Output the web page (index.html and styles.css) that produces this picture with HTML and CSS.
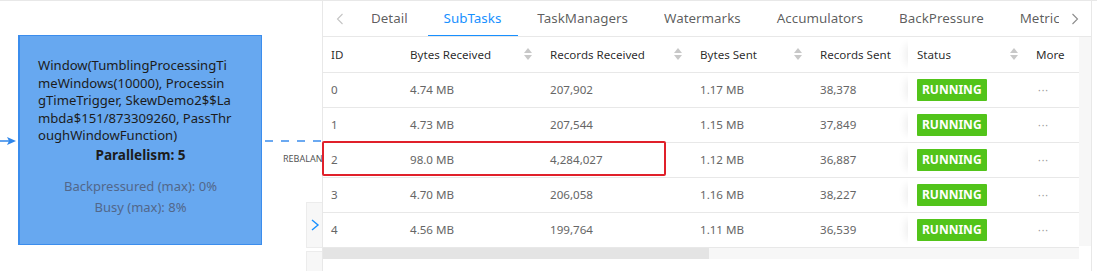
FILE: index.html
```html
<!DOCTYPE html>
<html>
<head>
  <title>SubTasks</title>
  <meta name="viewport" content="width=device-width,initial-scale=1">
  <link rel="stylesheet" href="styles.css">
</head>
<body>
  <div class="page">
    <div class="graph">
      <svg class="edge-in" width="18" height="10" viewBox="0 0 18 10">
        <line x1="0" y1="5" x2="9" y2="5" stroke="#2f86ea" stroke-width="1.5"/>
        <path d="M7 1 L16 5 L7 9 L9 5 Z" fill="#2f86ea"/>
      </svg>
      <div class="node">
        <div class="node-name">Window(TumblingProcessingTi<br>meWindows(10000), Processin<br>gTimeTrigger, SkewDemo2$$La<br>mbda$151/873309260, PassThr<br>oughWindowFunction)</div>
        <div class="node-para">Parallelism: 5</div>
        <div class="node-stat">Backpressured (max): 0%</div>
        <div class="node-stat">Busy (max): 8%</div>
      </div>
      <svg class="edge-out" width="57" height="4" viewBox="0 0 57 4">
        <line x1="0" y1="2" x2="57" y2="2" stroke="#3b8ded" stroke-width="1.3" stroke-dasharray="8 8"/>
      </svg>
      <div class="edge-label">REBALANCE</div>
      <div class="toggle toggle-open">
        <svg width="10" height="14" viewBox="0 0 10 14"><path d="M2 2 L8 7 L2 12" fill="none" stroke="#1890ff" stroke-width="1.4"/></svg>
      </div>
      <div class="toggle toggle-next">
        <svg width="10" height="14" viewBox="0 0 10 14"><path d="M3 12 L5 10" fill="none" stroke="#1890ff" stroke-width="1.4"/></svg>
      </div>
    </div>

    <div class="panel">
      <div class="tabs">
        <span class="tab-nav tab-prev">
          <svg width="8" height="12" viewBox="0 0 8 12"><path d="M6.5 1 L1.5 6 L6.5 11" fill="none" stroke="#c4c4c4" stroke-width="1.1"/></svg>
        </span>
        <div class="tab-list">
          <span class="tab">Detail</span>
          <span class="tab active">SubTasks</span>
          <span class="tab">TaskManagers</span>
          <span class="tab">Watermarks</span>
          <span class="tab">Accumulators</span>
          <span class="tab">BackPressure</span>
          <span class="tab">Metrics</span>
        </div>
        <span class="tab-nav tab-next">
          <svg width="8" height="12" viewBox="0 0 8 12"><path d="M1.5 1 L6.5 6 L1.5 11" fill="none" stroke="#8c8c8c" stroke-width="1.1"/></svg>
        </span>
      </div>

      <div class="table-area">
        <div class="table-body">
          <table class="subtasks">
            <colgroup>
              <col class="c-id"><col class="c-br"><col class="c-rr"><col class="c-bs"><col class="c-rs"><col class="c-st"><col class="c-more">
            </colgroup>
            <thead>
              <tr>
                <th>ID</th>
                <th><div class="th-sort">Bytes Received<i class="sorter"></i></div></th>
                <th><div class="th-sort">Records Received<i class="sorter"></i></div></th>
                <th><div class="th-sort">Bytes Sent<i class="sorter"></i></div></th>
                <th>Records Sent</th>
                <th class="fixed"><div class="th-sort">Status<i class="sorter"></i></div></th>
                <th>More</th>
              </tr>
            </thead>
            <tbody>
              <tr><td>0</td><td>4.74 MB</td><td>207,902</td><td>1.17 MB</td><td>38,378</td><td class="fixed"><span class="tag">RUNNING</span></td><td class="more">···</td></tr>
              <tr><td>1</td><td>4.73 MB</td><td>207,544</td><td>1.15 MB</td><td>37,849</td><td class="fixed"><span class="tag">RUNNING</span></td><td class="more">···</td></tr>
              <tr><td>2</td><td>98.0 MB</td><td>4,284,027</td><td>1.12 MB</td><td>36,887</td><td class="fixed"><span class="tag">RUNNING</span></td><td class="more">···</td></tr>
              <tr><td>3</td><td>4.70 MB</td><td>206,058</td><td>1.16 MB</td><td>38,227</td><td class="fixed"><span class="tag">RUNNING</span></td><td class="more">···</td></tr>
              <tr><td>4</td><td>4.56 MB</td><td>199,764</td><td>1.11 MB</td><td>36,539</td><td class="fixed"><span class="tag">RUNNING</span></td><td class="more">···</td></tr>
            </tbody>
          </table>
          <div class="hscroll"><div class="hscroll-thumb"></div></div>
          <div class="highlight"></div>
        </div>
        <div class="vscroll"></div>
      </div>
    </div>
  </div>
</body>
</html>
```

FILE: styles.css
```css
html,
body {
  margin: 0;
  background: #fff;
  font-family: 'Noto Sans', 'Open Sans', sans-serif;
  color: rgba(0, 0, 0, 0.65);
}

.page {
  display: flex;
  height: 271px;
  border-top: 1px solid #e8e8e8;
  box-sizing: border-box;
  overflow: hidden;
}

/* job graph */

.graph {
  width: 322px;
  flex: none;
  position: relative;
}

.edge-in {
  position: absolute;
  left: 0;
  top: 135px;
}

.node {
  position: absolute;
  left: 18px;
  top: 34px;
  width: 244px;
  height: 210px;
  box-sizing: border-box;
  padding: 21px 0 0 18px;

  background: #67a8f0;
  border: 1px solid #3b8ded;
  border-left-width: 2px;
  text-align: center;
}

.node-name {
  text-align: left;
  white-space: nowrap;
  font-size: 13.1px;
  line-height: 17.5px;
  color: #1c1c1c;
}

.node-para {
  margin-top: 1px;
  padding-right: 18px;
  font-size: 13.6px;
  font-weight: 700;
  line-height: 18px;
  color: #1c1c1c;
}

.node-stat {
  padding-right: 18px;
  font-size: 13px;
  line-height: 21px;
  color: #52678a;
}

.node-para + .node-stat {
  margin-top: 12px;
}

.edge-out {
  position: absolute;
  left: 265px;
  top: 138px;
}

.edge-label {
  position: absolute;
  left: 283px;
  top: 151px;
  width: 39px;
  overflow: hidden;
  font-size: 9px;
  color: #555;
  white-space: nowrap;
}

.toggle {
  position: absolute;
  left: 306px;
  width: 16px;
  box-sizing: border-box;
  background: #f7f7f7;
  border: 1px solid #ececec;
  border-right: none;
  display: flex;
  align-items: center;
  justify-content: center;
  z-index: 3;
}

.toggle-open {
  top: 201px;
  height: 46px;
}

.toggle-next {
  top: 250px;
  height: 30px;
  align-items: flex-end;
}

/* detail panel */

.panel {
  width: 770px;
  flex: none;
  display: flex;
  flex-direction: column;
  border-left: 1px solid #e8e8e8;
  border-right: 1px solid #e8e8e8;
  box-sizing: border-box;
  background: #fff;
  position: relative;
  z-index: 2;
}

.tabs {
  height: 35px;
  display: flex;
  align-items: center;
  border-bottom: 1px solid #e8e8e8;
  flex: none;
}

.tab-nav {
  height: 100%;
  flex: none;
  display: flex;
  align-items: center;
  justify-content: center;
}

.tab-prev {
  width: 30px;
  justify-content: flex-start;
  padding-left: 13px;
  box-sizing: border-box;
}

.tab-next {
  width: 32px;
}

.tab-list {
  flex: 1;
  display: flex;
  height: 100%;
  overflow: hidden;
}

.tab {
  flex: none;
  padding: 0 18px;
  font-size: 13.4px;
  line-height: 35px;
  color: rgba(0, 0, 0, 0.65);
  position: relative;
  white-space: nowrap;
}

.tab.active {
  color: #1890ff;
}

.tab.active::after {
  content: '';
  position: absolute;
  left: 2px;
  right: 1px;
  bottom: -1px;
  height: 2px;
  background: #1890ff;
}

.table-area {
  display: flex;
  flex: 1;
}

.table-body {
  width: 756px;
  position: relative;
}

.vscroll {
  width: 12px;
  height: 209px;
  background: #f7f7f7;
}

.subtasks {
  width: 756px;
  border-collapse: collapse;
  table-layout: fixed;
  font-size: 11.6px;
}

.c-id { width: 79px; }
.c-br { width: 140px; }
.c-rr { width: 150px; }
.c-bs { width: 120px; }
.c-rs { width: 96px; }
.c-st { width: 120px; }
.c-more { width: 51px; }

.subtasks th,
.subtasks td {
  height: 35px;
  padding: 0 10px 0 8px;
  border-bottom: 1px solid #e8e8e8;
  text-align: left;
  white-space: nowrap;
  box-sizing: border-box;
}

.subtasks th {
  font-weight: 400;
  color: rgba(0, 0, 0, 0.85);
}

.subtasks td {
  color: #666;
}

.th-sort {
  display: flex;
  align-items: center;
  justify-content: space-between;
}

.sorter {
  width: 8px;
  height: 12px;
  position: relative;
}

.sorter::before,
.sorter::after {
  content: '';
  position: absolute;
  left: 0;
  border-left: 4px solid transparent;
  border-right: 4px solid transparent;
}

.sorter::before {
  top: 0;
  border-bottom: 5px solid #c8c8c8;
}

.sorter::after {
  bottom: 0;
  border-top: 5px solid #c8c8c8;
}

.subtasks .fixed {
  box-shadow: -10px 0 8px -8px rgba(0, 0, 0, 0.08);
  padding-left: 9px;
}

.tag {
  display: inline-block;
  padding: 0 5px;
  background: #52c41a;
  color: #fff;
  font-weight: 700;
  font-size: 12px;
  line-height: 22px;
  border-radius: 1px;
}

.subtasks td.more {
  padding-left: 10px;
  color: #999;
  font-size: 10px;
  letter-spacing: 1px;
}

.hscroll {
  height: 11px;
  background: #f7f7f7;
}

.hscroll-thumb {
  width: 386px;
  height: 100%;
  background: #e4e4e4;
}

.highlight {
  position: absolute;
  left: -1px;
  top: 104px;
  width: 344px;
  height: 35px;
  box-sizing: border-box;
  border: 2px solid #e0202a;
  border-radius: 2px;
}
```
